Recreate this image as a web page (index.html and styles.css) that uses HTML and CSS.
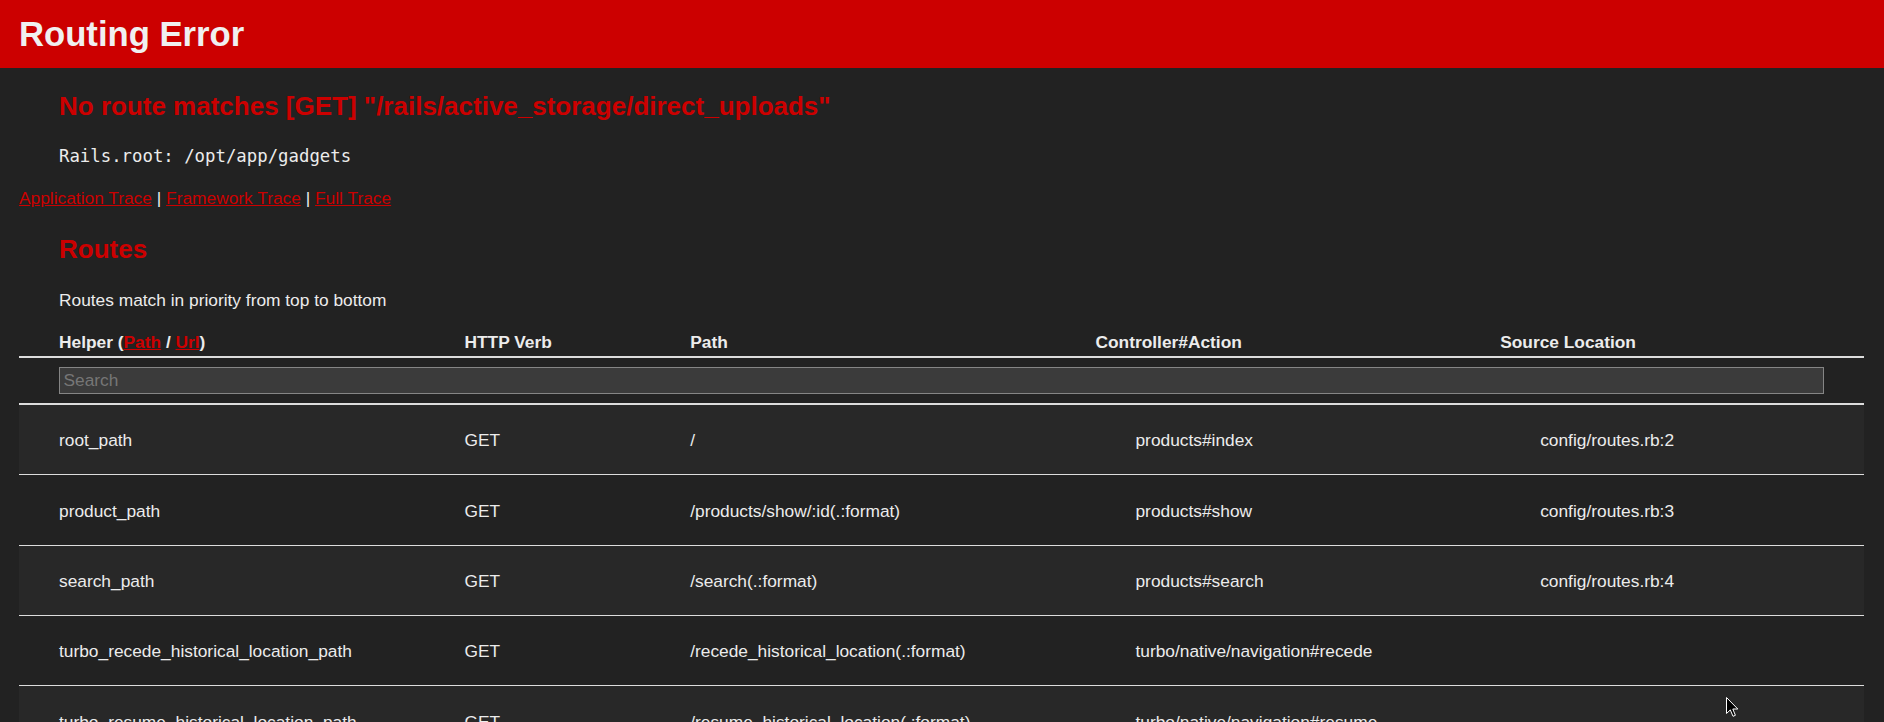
FILE: index.html
```html
<!DOCTYPE html>
<html lang="en">
<head>
<meta charset="utf-8">
<title>Action Controller: Exception caught</title>
<link rel="stylesheet" href="styles.css">
</head>
<body>
<header class="banner">
  <h1 class="banner-title">Routing Error</h1>
</header>
<main class="container">
  <h2 class="heading">No route matches [GET] "/rails/active_storage/direct_uploads"</h2>
  <p class="para"><code class="root">Rails.root: /opt/app/gadgets</code></p>
  <div class="traces">
    <a href="#" class="link">Application Trace</a> | <a href="#" class="link">Framework Trace</a> | <a href="#" class="link">Full Trace</a>
  </div>
  <h2 class="heading heading-routes">Routes</h2>
  <p class="para">Routes match in priority from top to bottom</p>
  <table class="route-table">
    <colgroup>
      <col class="col-helper">
      <col class="col-verb">
      <col class="col-path">
      <col class="col-action">
      <col class="col-source">
    </colgroup>
    <thead>
      <tr class="head-row">
        <th class="th">Helper (<a href="#" class="link">Path</a> / <a href="#" class="link">Url</a>)</th>
        <th class="th">HTTP Verb</th>
        <th class="th">Path</th>
        <th class="th">Controller#Action</th>
        <th class="th">Source Location</th>
      </tr>
      <tr class="search-row">
        <th class="search-cell" colspan="5"><input class="search" type="search" placeholder="Search"></th>
      </tr>
    </thead>
    <tbody>
      <tr class="route-row">
        <td class="td">root_path</td>
        <td class="td">GET</td>
        <td class="td">/</td>
        <td class="td"><p class="para">products#index</p></td>
        <td class="td"><p class="para">config/routes.rb:2</p></td>
      </tr>
      <tr class="route-row">
        <td class="td">product_path</td>
        <td class="td">GET</td>
        <td class="td">/products/show/:id(.:format)</td>
        <td class="td"><p class="para">products#show</p></td>
        <td class="td"><p class="para">config/routes.rb:3</p></td>
      </tr>
      <tr class="route-row">
        <td class="td">search_path</td>
        <td class="td">GET</td>
        <td class="td">/search(.:format)</td>
        <td class="td"><p class="para">products#search</p></td>
        <td class="td"><p class="para">config/routes.rb:4</p></td>
      </tr>
      <tr class="route-row">
        <td class="td">turbo_recede_historical_location_path</td>
        <td class="td">GET</td>
        <td class="td">/recede_historical_location(.:format)</td>
        <td class="td"><p class="para">turbo/native/navigation#recede</p></td>
        <td class="td"><p class="para"></p></td>
      </tr>
      <tr class="route-row">
        <td class="td">turbo_resume_historical_location_path</td>
        <td class="td">GET</td>
        <td class="td">/resume_historical_location(.:format)</td>
        <td class="td"><p class="para">turbo/native/navigation#resume</p></td>
        <td class="td"><p class="para"></p></td>
      </tr>
      <tr class="route-row">
        <td class="td">turbo_refresh_historical_location_path</td>
        <td class="td">GET</td>
        <td class="td">/refresh_historical_location(.:format)</td>
        <td class="td"><p class="para">turbo/native/navigation#refresh</p></td>
        <td class="td"><p class="para"></p></td>
      </tr>
    </tbody>
  </table>
</main>
<svg class="cursor" width="13" height="21" viewBox="0 0 13 21" aria-hidden="true">
  <path d="M0.5 0.5 L0.5 16.5 L4.3 12.9 L7 19.3 L9.4 18.3 L6.8 12 L11.8 12 Z" fill="#000" stroke="#fff" stroke-width="1" stroke-linejoin="round"/>
</svg>
</body>
</html>
```

FILE: styles.css
```css
html, body {
  margin: 0;
  padding: 0;
}

body {
  background-color: #222222;
  color: #ECECEC;
  font-family: "Liberation Sans", Arial, Helvetica, sans-serif;
  font-size: 17.333px;
  line-height: 24px;
  position: relative;
}

.banner {
  background: #CC0000;
  color: #F0F0F0;
  padding: 8.4px 20px 7.6px 19px;
}

.banner-title {
  margin: 6.933px 0;
  font-size: 34.667px;
  line-height: 38.13px;
  font-weight: bold;
}

.container {
  box-sizing: border-box;
  width: 100%;
  padding: 0 20px 0 19px;
}

.heading {
  color: #CC0000;
  font-size: 26px;
  line-height: 33.333px;
  font-weight: bold;
  margin: 21.58px 0;
  padding-left: 40px;
}

.heading-routes {
  margin-top: 23.2px;
}

.para {
  margin: 17.333px 0;
  padding-left: 40px;
  line-height: 24px;
}

.root {
  font-family: "DejaVu Sans Mono", "Liberation Mono", monospace;
  font-size: 17.333px;
}

.link {
  color: #CC0000;
  text-decoration: underline;
}

.traces {
  line-height: 24px;
}

.route-table {
  margin: 0;
  border-collapse: collapse;
  table-layout: fixed;
  width: 100%;
  word-wrap: break-word;
}

.col-helper { width: 405.5px; }
.col-verb { width: 225.7px; }
.col-path { width: 405.3px; }
.col-action { width: 404.7px; }

.head-row {
  border-bottom: 2px solid #DDDDDD;
}

.th {
  padding: 1px 0 1.666px 40px;
  text-align: left;
  font-weight: bold;
  line-height: 24px;
}

.search-row {
  border-bottom: 2px solid #DDDDDD;
}

.search-cell {
  padding: 8.8px 40px 8.6px;
  text-align: left;
}

.search {
  display: block;
  box-sizing: border-box;
  width: 100%;
  height: 27.7px;
  margin: 0;
  padding: 0 3.5px;
  border: 1px solid #858585;
  background: #3B3B3B;
  color: #ECECEC;
  font-family: "Liberation Sans", Arial, sans-serif;
  font-size: 17.333px;
  outline: none;
  -webkit-appearance: none;
  appearance: none;
}

.search::placeholder {
  color: #767676;
}

.route-row {
  border-bottom: 1px solid #DDDDDD;
}

.route-row:nth-child(odd) {
  background: #282828;
}

.td {
  padding: 6.2px 40px 4.466px;
  vertical-align: middle;
  line-height: 24px;
}

.cursor {
  position: absolute;
  left: 1726px;
  top: 697px;
}
```
